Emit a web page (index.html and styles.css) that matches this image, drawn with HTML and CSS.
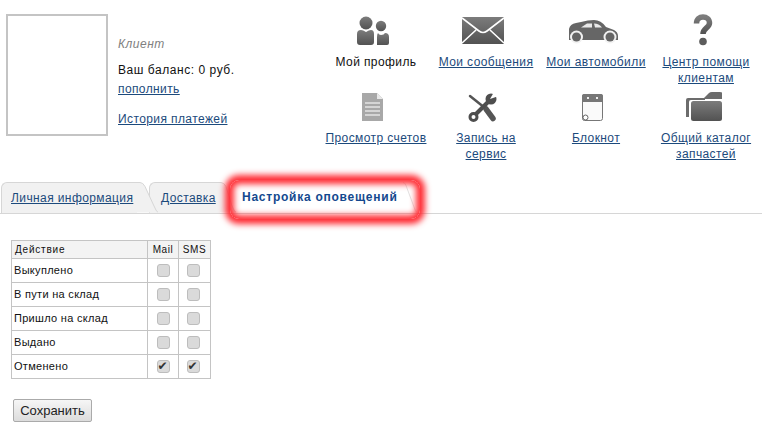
FILE: index.html
```html
<!DOCTYPE html>
<html lang="ru">
<head>
<meta charset="utf-8">
<title>Настройка оповещений</title>
<link rel="stylesheet" href="styles.css">
</head>
<body>
<svg class="defs" width="0" height="0">
  <defs>
    <linearGradient id="g" x1="0" y1="0" x2="0" y2="1"><stop offset="0" stop-color="#7c7c7c"/><stop offset="1" stop-color="#525252"/></linearGradient>
  </defs>
</svg>
<header class="top">
  <div class="avatar"></div>
  <div class="info">
    <div class="role">Клиент</div>
    <div class="balance">Ваш баланс: 0 руб.</div>
    <a class="link" href="#">пополнить</a>
    <a class="link history" href="#">История платежей</a>
  </div>
  <nav class="menu">
    <div class="item">
      <svg class="icon" width="36" height="32" viewBox="0 0 36 32"><circle cx="11" cy="9" r="6.5" fill="url(#g)"/><path d="M2 20q0-4 4-4 2 0 5 2 3-2 5-2 3 0 3 4v8q0 3-3 3H5q-3 0-3-3z" fill="url(#g)"/><circle cx="26" cy="12" r="5.2" fill="url(#g)"/><path d="M22 31V23q0-3 1-4 1 2 3 2 3 0 4-2 4 0 4 4v6q0 2-2 2z" fill="url(#g)"/></svg>
      <span class="plain">Мой профиль</span>
    </div>
    <div class="item">
      <svg class="icon" width="42" height="32" viewBox="0 0 42 32"><rect y="3" width="42" height="27" rx="1" fill="url(#g)"/><path d="M0 4l17 13q4 3 8 0L42 4M0 29l14-13M42 29L28 16" fill="none" stroke="#fff" stroke-width="1.6"/></svg>
      <a class="link" href="#">Мои сообщения</a>
    </div>
    <div class="item">
      <svg class="icon" width="50" height="32" viewBox="0 0 50 32"><path d="M1 21V15Q2 10 8 9L13 8Q20 6 26 6 33 6 38 13L46 16Q50 18 50 22V26H1Z" fill="#666"/><path d="M13 13.500L19 9.500H24V13.500ZM26 9.500Q31 9.500 34 13.500H27Z" fill="#e9e9e9"/><circle cx="8.500" cy="23" r="6.500" fill="#f2f2f2"/><circle cx="8.500" cy="23" r="4.500" fill="#666"/><circle cx="42" cy="23" r="6.500" fill="#f2f2f2"/><circle cx="42" cy="23" r="4.500" fill="#666"/></svg>
      <a class="link" href="#">Мои автомобили</a>
    </div>
    <div class="item">
      <svg class="icon" width="20" height="32" viewBox="0 0 20 32"><path d="M3.500 9.500C3.500 5 6.500 3 10 3s6.500 2 6.500 6c0 5-6.500 5-6.500 11" fill="none" stroke="url(#g)" stroke-width="5.500"/><circle cx="10" cy="27.500" r="3.800" fill="#5c5c5c"/></svg>
      <a class="link" href="#">Центр помощи клиентам</a>
    </div>
    <div class="item">
      <svg class="icon" width="22" height="32" viewBox="0 0 22 32"><path d="M0 3h15l6 6v22H0z" fill="#a8a8a8"/><path d="M15 3l6 6h-6z" fill="#e8e8e8"/><path d="M3 13h15M3 17h15M3 21h15M3 25h15" stroke="#e4e4e4" stroke-width="1.500"/></svg>
      <a class="link" href="#">Просмотр счетов</a>
    </div>
    <div class="item">
      <svg class="icon" width="30" height="32" viewBox="0 0 30 32"><path d="M2 6L17 18" stroke="#555" stroke-width="2.500" stroke-linecap="round"/><path d="M18 19L25 28.500" stroke="#555" stroke-width="5.500" stroke-linecap="round"/><path d="M6 26L23 9" stroke="#4e4e4e" stroke-width="4"/><circle cx="5.500" cy="27" r="3.500" fill="#fff" stroke="#4e4e4e" stroke-width="3"/><circle cx="23" cy="9" r="5.500" fill="#4e4e4e"/><path d="M22 9L26 2H31V6Z" fill="#fff"/></svg>
      <a class="link" href="#">Запись на<br>сервис</a>
    </div>
    <div class="item">
      <svg class="icon" width="22" height="32" viewBox="0 0 22 32"><rect x=".5" y="4.500" width="20" height="26" rx="2" fill="#fafafa" stroke="#777"/><path d="M0 6q0-2 2-2h17q2 0 2 2v6H0z" fill="#777"/><rect x="5" y="7" width="2" height="2" fill="#eee"/><rect x="14" y="7" width="2" height="2" fill="#eee"/><circle cx="3.500" cy="27.500" r="2.500" fill="#fff" stroke="#666"/></svg>
      <a class="link" href="#">Блокнот</a>
    </div>
    <div class="item">
      <svg class="icon" width="38" height="32" viewBox="0 0 38 32"><path d="M20 8L25 3Q26 2 28 2H36Q39 2 39 5V9H20Z" fill="#6c6c6c"/><path d="M2 27V10Q2 8 4 8H21V10H7Q5 10 5 12V27Z" fill="#6c6c6c"/><rect x="7" y="11" width="31" height="20" rx="2.500" fill="url(#g)"/></svg>
      <a class="link" href="#">Общий каталог запчастей</a>
    </div>
  </nav>
</header>

<div class="tabs">
  <div class="tab t1"><a class="link" href="#">Личная информация</a></div>
  <svg class="slant s1" width="21" height="31" viewBox="0 0 21 31"><path d="M0 .5h3q3 0 5 4L17 24q2 5 4 6.500H0z" fill="#f1f1f1"/><path d="M0 .5h3q3 0 5 4L17 24q2 5 4 6.500" fill="none" stroke="#d6d6d6"/></svg>
  <div class="tab t2"><a class="link" href="#">Доставка</a></div>
  <svg class="slant" width="16" height="31" viewBox="0 0 16 31"><path d="M0 .5h1q3 0 5 4L12 24q2 5 4 6.500H0z" fill="#f1f1f1"/><path d="M0 .5h1q3 0 5 4L12 24q2 5 4 6.500" fill="none" stroke="#d6d6d6"/></svg>
  <div class="tab active">Настройка оповещений<div class="glow"></div></div>
  <svg class="slant" width="14" height="31" viewBox="0 0 14 31"><path d="M0 .5q2 0 3 3L11 25q1 4 3 5.500" fill="none" stroke="#e2e2e2"/></svg>
</div>

<table class="grid">
  <thead>
    <tr><th class="name">Действие</th><th>Mail</th><th>SMS</th></tr>
  </thead>
  <tbody>
    <tr><td class="name">Выкуплено</td><td><input type="checkbox"></td><td><input type="checkbox"></td></tr>
    <tr><td class="name">В пути на склад</td><td><input type="checkbox"></td><td><input type="checkbox"></td></tr>
    <tr><td class="name">Пришло на склад</td><td><input type="checkbox"></td><td><input type="checkbox"></td></tr>
    <tr><td class="name">Выдано</td><td><input type="checkbox"></td><td><input type="checkbox"></td></tr>
    <tr><td class="name">Отменено</td><td><input type="checkbox" checked></td><td><input type="checkbox" checked></td></tr>
  </tbody>
</table>

<button class="save" type="button">Сохранить</button>
</body>
</html>
```
FILE: styles.css
```css
* { box-sizing: border-box; }
html, body { margin: 0; padding: 0; background: #fff; }
body { width: 762px; height: 446px; overflow: hidden; font: 12px/16px "Liberation Sans", Arial, sans-serif; color: #111; }
.defs { display: block; }
.link { color: #1c4a7c; text-decoration: underline; letter-spacing: .4px; }

.top { display: flex; height: 182px; padding: 14px 0 0 6px; }
.avatar { width: 102px; height: 122px; border: 2px solid #c4c4c4; flex: none; }
.info { width: 213px; padding: 22px 0 0 10px; display: flex; flex-direction: column; align-items: flex-start; flex: none; }
.role { font-style: italic; letter-spacing: .5px; color: #808080; }
.balance { margin-top: 10px; letter-spacing: .55px; }
.info .link { margin-top: 3px; }
.info .link.history { margin-top: 14px; }

.menu { display: grid; grid-template-columns: repeat(4, 110px); grid-auto-rows: 76px; }
.item { display: flex; flex-direction: column; align-items: center; text-align: center; }
.icon { display: block; flex: none; height: 32px; margin: 0 6px 8px 0; }
.plain { letter-spacing: .4px; }

.tabs { display: flex; align-items: stretch; height: 32px; border-bottom: 1px solid #d6d6d6; padding-left: 1px; }
.tab { height: 31px; line-height: 30px; background: #f1f1f1; }
.t1 { width: 136px; padding-left: 9px; border: 1px solid #d6d6d6; border-width: 1px 0 0 1px; border-radius: 6px 0 0 0; }
.t2 { width: 71px; margin-left: -9px; padding-left: 11px; border-top: 1px solid #d6d6d6; border-left: 1px solid #d6d6d6; border-radius: 6px 0 0 0; }
.slant { flex: none; display: block; }
.s1 { position: relative; z-index: 1; }
.active { position: relative; z-index: 2; width: 167px; padding-left: 6px; background: transparent; color: #14488e; font-weight: bold; letter-spacing: .75px; white-space: nowrap; }
.glow { position: absolute; left: -6px; right: -17px; top: -2px; bottom: -6px; border-radius: 9px; box-shadow: 0 0 6px 5px #ff2b33, inset 0 0 6px 4px #ff2b33; }

.grid { margin: 26px 0 0 11px; width: 200px; border-collapse: collapse; table-layout: fixed; font-size: 11px; }
.grid th, .grid td { border: 1px solid #c4c4c4; padding: 0; text-align: center; }
.grid th { height: 18px; background: #f3f3f3; font-weight: normal; font-size: 10px; letter-spacing: .6px; }
.grid th:nth-child(2), .grid td:nth-child(2) { width: 31px; }
.grid th:nth-child(3), .grid td:nth-child(3) { width: 32px; }
.grid td:nth-child(3) { padding-right: 3px; }
.grid td { height: 24px; }
.grid td.name { padding: 0 0 2px 2px; letter-spacing: .3px; }
.grid .name { text-align: left; padding-left: 3px; letter-spacing: .8px; }
.grid input { appearance: none; -webkit-appearance: none; display: block; position: relative; margin: 0 auto; width: 13px; height: 13px; background: #dadada; border: 1px solid #bdbdbd; border-radius: 3px; }
.grid input:checked::after { content: "✔"; position: absolute; left: 0; top: -1px; font: 12px/13px "DejaVu Sans", sans-serif; color: #333; }

.save { display: block; margin: 20px 0 0 13px; width: 79px; height: 23px; padding: 0; border: 1px solid #aaa; border-radius: 2px; background: linear-gradient(#f6f6f6, #dcdcdc); font: 13px "Liberation Sans", Arial, sans-serif; color: #222; }
```
